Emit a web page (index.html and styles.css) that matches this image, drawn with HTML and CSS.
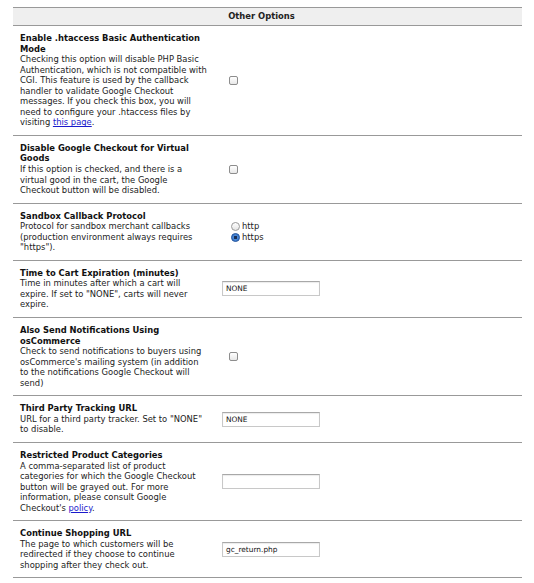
FILE: index.html
```html
<!DOCTYPE html>
<html>
<head>
<meta charset="utf-8">
<link rel="stylesheet" href="styles.css">
</head>
<body>
<table class="options">
  <tr class="head"><th colspan="2">Other Options</th></tr>
  <tr>
    <td class="label"><b class="title">Enable .htaccess Basic Authentication Mode</b>Checking this option will disable PHP Basic Authentication, which is not compatible with CGI. This feature is used by the callback handler to validate Google Checkout messages. If you check this box, you will need to configure your .htaccess files by visiting <a href="#">this page</a>.</td>
    <td class="control"><span class="check"></span></td>
  </tr>
  <tr>
    <td class="label"><b class="title">Disable Google Checkout for Virtual Goods</b>If this option is checked, and there is a virtual good in the cart, the Google<br>Checkout button will be disabled.</td>
    <td class="control"><span class="check"></span></td>
  </tr>
  <tr>
    <td class="label"><b class="title">Sandbox Callback Protocol</b>Protocol for sandbox merchant callbacks (production environment always requires "https").</td>
    <td class="control">
      <div class="radio-line"><span class="radio"></span>http</div>
      <div class="radio-line"><span class="radio on"></span>https</div>
    </td>
  </tr>
  <tr>
    <td class="label"><b class="title">Time to Cart Expiration (minutes)</b>Time in minutes after which a cart will expire. If set to "NONE", carts will never expire.</td>
    <td class="control"><span class="field">NONE</span></td>
  </tr>
  <tr>
    <td class="label"><b class="title">Also Send Notifications Using osCommerce</b>Check to send notifications to buyers using osCommerce's mailing system (in addition<br>to the notifications Google Checkout will<br>send)</td>
    <td class="control"><span class="check"></span></td>
  </tr>
  <tr>
    <td class="label"><b class="title">Third Party Tracking URL</b>URL for a third party tracker. Set to "NONE" to disable.</td>
    <td class="control"><span class="field">NONE</span></td>
  </tr>
  <tr>
    <td class="label"><b class="title">Restricted Product Categories</b>A comma-separated list of product categories for which the Google Checkout button will be grayed out. For more information, please consult Google Checkout's <a href="#">policy</a>.</td>
    <td class="control"><span class="field"></span></td>
  </tr>
  <tr>
    <td class="label"><b class="title">Continue Shopping URL</b>The page to which customers will be redirected if they choose to continue shopping after they check out.</td>
    <td class="control"><span class="field">gc_return.php</span></td>
  </tr>
</table>
</body>
</html>
```

FILE: styles.css
```css
html, body {
  margin: 0;
  background: #ffffff;
}
body {
  padding: 7px 12px 0 13px;
  font-family: "DejaVu Sans", Verdana, sans-serif;
  font-size: 8.4px;
  line-height: 10.55px;
  color: #222222;
}
.options {
  width: 509px;
  border-collapse: collapse;
}
.head th {
  background: #efefef;
  border-top: 1px solid #999999;
  border-bottom: 1px solid #999999;
  height: 17px;
  padding: 0 12px 0 0;
  font-weight: bold;
  text-align: center;
  color: #222222;
}
.options td {
  border-bottom: 1px solid #999999;
  vertical-align: middle;
}
.label {
  width: 190px;
  padding: 7px 5px 7px 7px;
}
.title {
  display: block;
  font-weight: bold;
  color: #111111;
}
.label a {
  color: #1a1acc;
  text-decoration: underline;
}
.control {
  padding: 0 0 0 7px;
}
.check {
  display: inline-block;
  width: 7px;
  height: 7px;
  margin-left: 7px;
  border: 1px solid #8d8d8d;
  border-radius: 2px;
  background: linear-gradient(#ffffff, #e8e8e8);
  vertical-align: middle;
}
.radio-line {
  display: flex;
  align-items: center;
  gap: 2px;
  height: 10.6px;
  margin-left: 9px;
}
.radio {
  display: inline-block;
  width: 7px;
  height: 7px;
  border: 1px solid #9a9a9a;
  border-radius: 50%;
  background: linear-gradient(#ffffff, #e4e4e4);
}
.radio.on {
  background: radial-gradient(circle, #1a2f55 0 1.4px, #4a8ad8 1.9px, #2a66c0 100%);
  border-color: #2b5a9e;
}
.field {
  display: block;
  box-sizing: border-box;
  width: 98px;
  height: 15px;
  border: 1px solid #c8c8c8;
  border-top-color: #a8a8a8;
  box-shadow: inset 0 1px 1px rgba(0,0,0,0.08);
  background: #ffffff;
  padding: 0 3px;
  font-size: 7.4px;
  line-height: 13px;
  color: #111111;
}
```
